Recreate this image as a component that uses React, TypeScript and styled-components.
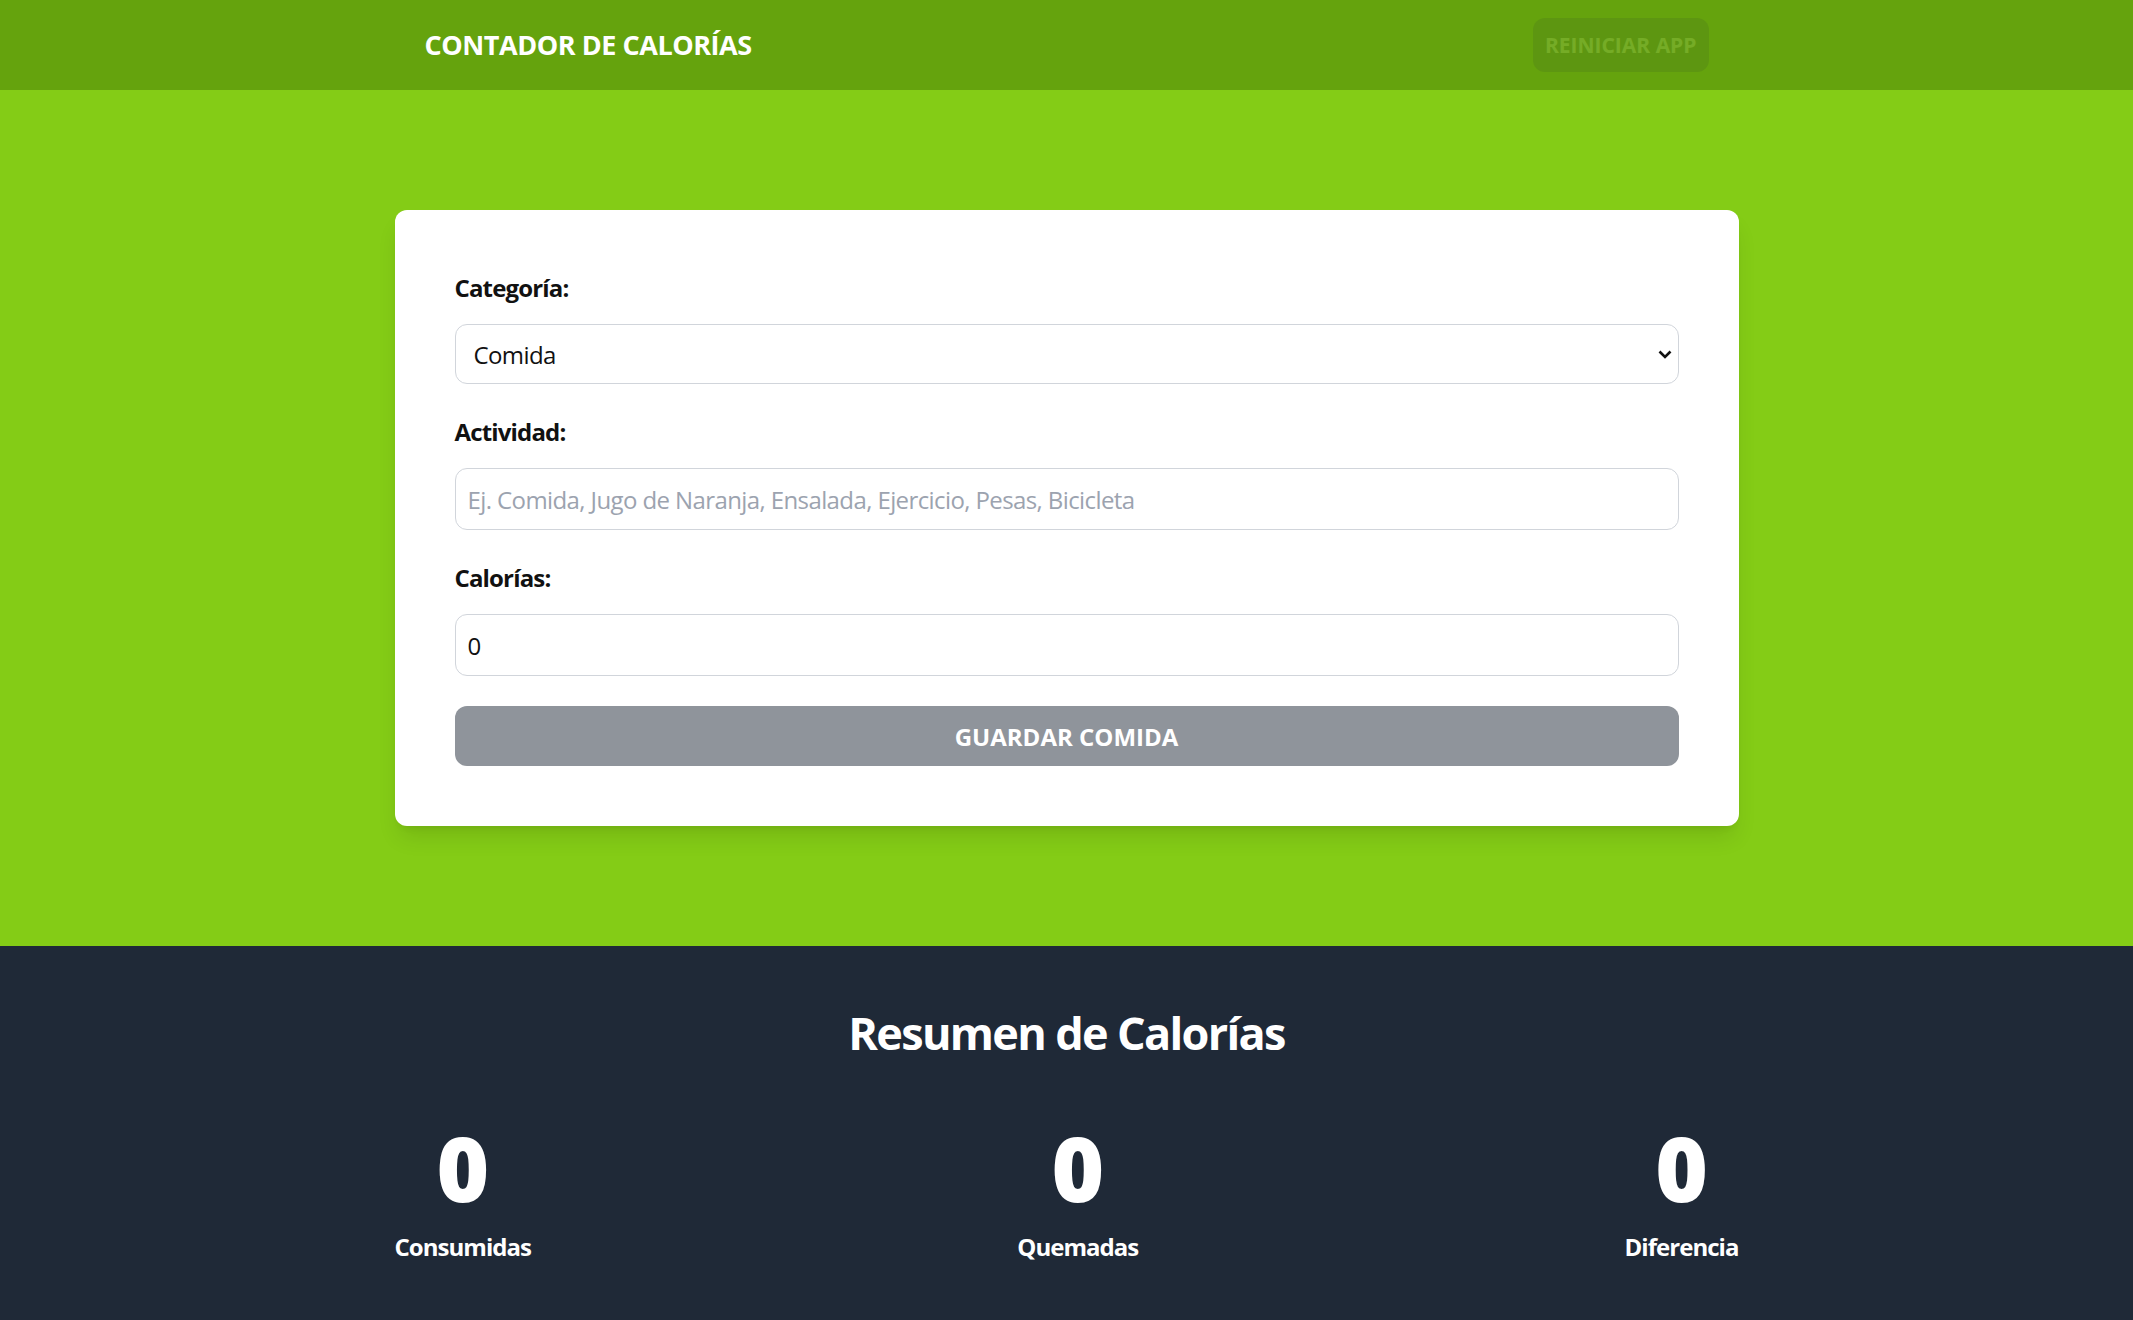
import styled, { createGlobalStyle } from "styled-components";

const stats = [
    { id: 1, value: 0, label: "Consumidas" },
    { id: 2, value: 0, label: "Quemadas" },
    { id: 3, value: 0, label: "Diferencia" },
];

export default function App() {
    return (
        <>
            <GlobalStyle />
            <Header>
                <HeaderInner>
                    <Brand>Contador de Calorías</Brand>
                    <ResetButton disabled>Reiniciar App</ResetButton>
                </HeaderInner>
            </Header>

            <FormSection>
                <Card onSubmit={(e) => e.preventDefault()}>
                    <Field>
                        <Label htmlFor="category">Categoría:</Label>
                        <SelectWrap>
                            <Select id="category" defaultValue="1">
                                <option value="1">Comida</option>
                                <option value="2">Ejercicio</option>
                            </Select>
                            <Chevron width="14" height="9" viewBox="0 0 14 9">
                                <path d="M1.5 1.5 L7 7 L12.5 1.5" fill="none" stroke="#111" strokeWidth="2.6" />
                            </Chevron>
                        </SelectWrap>
                    </Field>

                    <Field>
                        <Label htmlFor="name">Actividad:</Label>
                        <Input id="name" type="text" placeholder="Ej. Comida, Jugo de Naranja, Ensalada, Ejercicio, Pesas, Bicicleta" />
                    </Field>

                    <Field>
                        <Label htmlFor="calories">Calorías:</Label>
                        <Input id="calories" type="number" defaultValue={0} />
                    </Field>

                    <SubmitButton type="submit" disabled>Guardar Comida</SubmitButton>
                </Card>
            </FormSection>

            <Summary>
                <SummaryInner>
                    <SummaryTitle>Resumen de Calorías</SummaryTitle>
                    <Stats>
                        {stats.map((stat) => (
                            <Stat key={stat.id}>
                                <StatValue>{stat.value}</StatValue>
                                <StatLabel>{stat.label}</StatLabel>
                            </Stat>
                        ))}
                    </Stats>
                </SummaryInner>
            </Summary>
        </>
    );
}

const GlobalStyle = createGlobalStyle`
    * {
        box-sizing: border-box;
    }

    body {
        margin: 0;
        font-family: "Open Sans", "Noto Sans", sans-serif;
        background-color: #1f2937;
    }
`;

const Header = styled.header`
    background-color: #65a30d;
    padding: 18px 0;
`;

const HeaderInner = styled.div`
    max-width: 1344px;
    margin: 0 auto;
    padding: 0 30px;
    display: flex;
    justify-content: space-between;
    align-items: center;
`;

const Brand = styled.h1`
    margin: 0;
    font-size: 27px;
    line-height: 42px;
    font-weight: 700;
    letter-spacing: -0.45px;
    color: #fff;
    text-transform: uppercase;
`;

const ResetButton = styled.button`
    border: none;
    border-radius: 12px;
    padding: 12px;
    background-color: #1f2937;
    color: #fff;
    font-family: inherit;
    font-size: 21px;
    line-height: 30px;
    font-weight: 700;
    text-transform: uppercase;

    &:disabled {
        opacity: 0.1;
    }
`;

const FormSection = styled.section`
    background-color: #84cc16;
    padding: 120px 0;
`;

const Card = styled.form`
    max-width: 1344px;
    margin: 0 auto;
    padding: 60px;
    background-color: #fff;
    border-radius: 12px;
    box-shadow: 0 15px 22px -4px rgba(0, 0, 0, 0.1), 0 6px 9px -6px rgba(0, 0, 0, 0.1);
    display: flex;
    flex-direction: column;
    gap: 30px;
`;

const Field = styled.div`
    display: grid;
    gap: 18px;
`;

const Label = styled.label`
    font-size: 24px;
    line-height: 36px;
    font-weight: 700;
    letter-spacing: -0.035em;
    color: #111;
`;

const fieldBase = `
    width: 100%;
    border: 1px solid #d1d5db;
    border-radius: 12px;
    background-color: #fff;
    font-family: inherit;
    font-size: 24px;
    letter-spacing: -0.025em;
    color: #111;
    outline: none;
`;

const SelectWrap = styled.div`
    position: relative;
`;

const Select = styled.select`
    ${fieldBase}
    height: 60px;
    appearance: none;
    padding: 0 40px 0 18px;
`;

const Chevron = styled.svg`
    position: absolute;
    right: 7px;
    top: 26px;
    pointer-events: none;
`;

const Input = styled.input`
    ${fieldBase}
    height: 62px;
    padding: 0 12px;

    &::placeholder {
        color: #9ca3af;
    }

    &::-webkit-outer-spin-button,
    &::-webkit-inner-spin-button {
        -webkit-appearance: none;
        margin: 0;
    }
`;

const SubmitButton = styled.button`
    width: 100%;
    height: 60px;
    border: none;
    border-radius: 12px;
    background-color: #8f949b;
    color: #fff;
    font-family: inherit;
    font-size: 24px;
    font-weight: 700;
    text-transform: uppercase;
    cursor: pointer;

    &:disabled {
        cursor: default;
    }
`;

const Summary = styled.section`
    background-color: #1f2937;
    padding: 60px 0;
`;

const SummaryInner = styled.div`
    max-width: 1344px;
    margin: 0 auto;
`;

const SummaryTitle = styled.h2`
    margin: 0 0 62px;
    text-align: center;
    font-size: 45px;
    line-height: 54px;
    font-weight: 700;
    letter-spacing: -0.037em;
    color: #fff;
`;

const Stats = styled.div`
    display: flex;
    justify-content: space-between;
`;

const Stat = styled.div`
    display: flex;
    flex-direction: column;
    align-items: center;
    gap: 17px;
    color: #fff;
`;

const StatValue = styled.span`
    font-size: 90px;
    line-height: 90px;
    font-weight: 900;
`;

const StatLabel = styled.span`
    font-size: 24px;
    line-height: 36px;
    font-weight: 700;
    letter-spacing: -0.04em;
`;
